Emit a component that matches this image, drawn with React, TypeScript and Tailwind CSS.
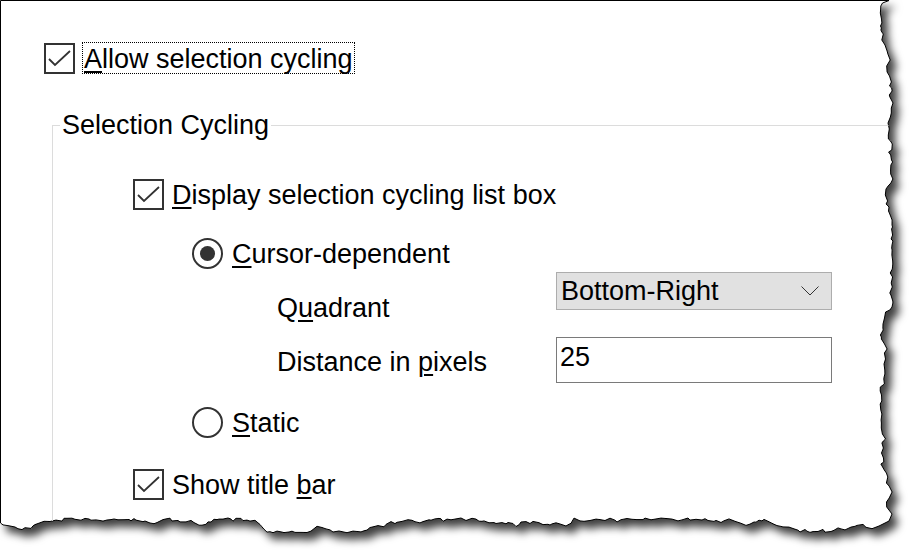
import { useMemo } from "react";

// jagged "torn paper" outline for the right and bottom edges
function tornPoints() {
	let s = 11;
	const r = () => {
		s = (s * 16807) % 2147483647;
		return s / 2147483647;
	};
	const pts: string[] = ["0.5,0.5", "889,0.5"];
	let x = 886;
	for (let y = 3; y < 510; y += 2 + Math.floor(r() * 5)) {
		x += (r() - 0.5) * 7;
		if (r() > 0.88) x += (r() - 0.5) * 12;
		if (x < 880) x = 880 + r() * 2;
		if (x > 893) x = 893 - r() * 2;
		pts.push(`${x.toFixed(1)},${y}`);
	}
	pts.push("892,514", "889,521", "879,526");
	let y = 527;
	for (let xx = 872; xx > 2; xx -= 2 + Math.floor(r() * 5)) {
		y += (r() - 0.5) * 6;
		if (r() > 0.88) y += (r() - 0.5) * 10;
		if (y < 518) y = 518 + r() * 2;
		if (y > 533) y = 533 - r() * 2;
		pts.push(`${xx},${y.toFixed(1)}`);
	}
	pts.push("0.5,523");
	return pts.join(" ");
}

function TornPaper({ points }: { points: string }) {
	return (
		<svg className="absolute inset-0" width={918} height={557}>
			<defs>
				<filter id="paper-shadow" x="-5%" y="-5%" width="115%" height="115%">
					<feDropShadow dx="6" dy="7" stdDeviation="4" floodColor="#000" floodOpacity="0.75" />
				</filter>
				<clipPath id="torn-clip">
					<polygon points={points} />
				</clipPath>
			</defs>
			<polygon points={points} fill="#fff" stroke="#000" strokeWidth={1} filter="url(#paper-shadow)" />
		</svg>
	);
}

function CheckBox() {
	return (
		<div className="w-[31px] h-[31px] shrink-0 border-2 border-[#333] bg-white">
			<svg width={27} height={27} viewBox="0 0 27 27">
				<polyline points="3,14 9,20 24,6" fill="none" stroke="#333" strokeWidth={1.8} />
			</svg>
		</div>
	);
}

function Radio({ checked }: { checked?: boolean }) {
	return (
		<div className="w-[31px] h-[31px] shrink-0 rounded-full border-2 border-[#333] bg-white flex items-center justify-center">
			{checked && <div className="w-[15px] h-[15px] rounded-full bg-[#333]" />}
		</div>
	);
}

const ul = "underline decoration-[1.5px] underline-offset-[3px]";

export default function App() {
	const points = useMemo(tornPoints, []);

	return (
		<div className="relative w-[918px] h-[557px] bg-white overflow-hidden">
			<TornPaper points={points} />
			<div className="relative h-full [clip-path:url(#torn-clip)] font-['Liberation_Sans',Arial,sans-serif] text-[27px] leading-[32px] text-black pt-[42px] pl-[44px]">
				<div className="flex items-center h-[32px]">
					<CheckBox />
					<label className="ml-[7px] h-[32px] border border-dotted border-black px-px pt-[2px] leading-[28px]">
						<span className={ul}>A</span>llow selection cycling
					</label>
				</div>

				<fieldset className="mt-[35px] ml-[8px] h-[520px] border-0 border-t border-l border-[#dcdcdc]">
					<legend className="ml-[7px] px-[2px] leading-[32px]">Selection Cycling</legend>

					<div className="mt-[37px] ml-[80px] flex items-center gap-[8px] h-[32px]">
						<CheckBox />
						<span className="pt-[2px]">
							<span className={ul}>D</span>isplay selection cycling list box
						</span>
					</div>

					<div className="mt-[27px] ml-[139px] flex items-center gap-[9px] h-[32px]">
						<Radio checked />
						<span className="pt-[2px]">
							<span className={ul}>C</span>ursor-dependent
						</span>
					</div>

					<div className="mt-[3px] flex items-start">
						<span className="ml-[224px] w-[279px] mt-[20px]">
							Q<span className={ul}>u</span>adrant
						</span>
						<div className="w-[276px] h-[38px] border border-[#adadad] bg-[#e1e1e1] flex items-center justify-between pl-[4px] pr-[12px]">
							<span>Bottom-Right</span>
							<svg width={18} height={10} viewBox="0 0 18 10">
								<polyline points="0.5,0.5 9,9 17.5,0.5" fill="none" stroke="#333" strokeWidth={1} />
							</svg>
						</div>
					</div>

					<div className="mt-[13px] flex items-start">
						<span className="ml-[224px] w-[279px] mt-[9px]">
							Distance in <span className={ul}>p</span>ixels
						</span>
						<div className="w-[276px] h-[46px] border border-[#7a7a7a] bg-white pl-[3px] pt-[3px]">25</div>
					</div>

					<div className="mt-[23px] ml-[139px] flex items-center gap-[9px] h-[32px]">
						<Radio />
						<span className="pt-[2px]">
							<span className={ul}>S</span>tatic
						</span>
					</div>

					<div className="mt-[30px] ml-[80px] flex items-center gap-[8px] h-[32px]">
						<CheckBox />
						<span className="pt-[2px]">
							Show title <span className={ul}>b</span>ar
						</span>
					</div>
				</fieldset>
			</div>
		</div>
	);
}
